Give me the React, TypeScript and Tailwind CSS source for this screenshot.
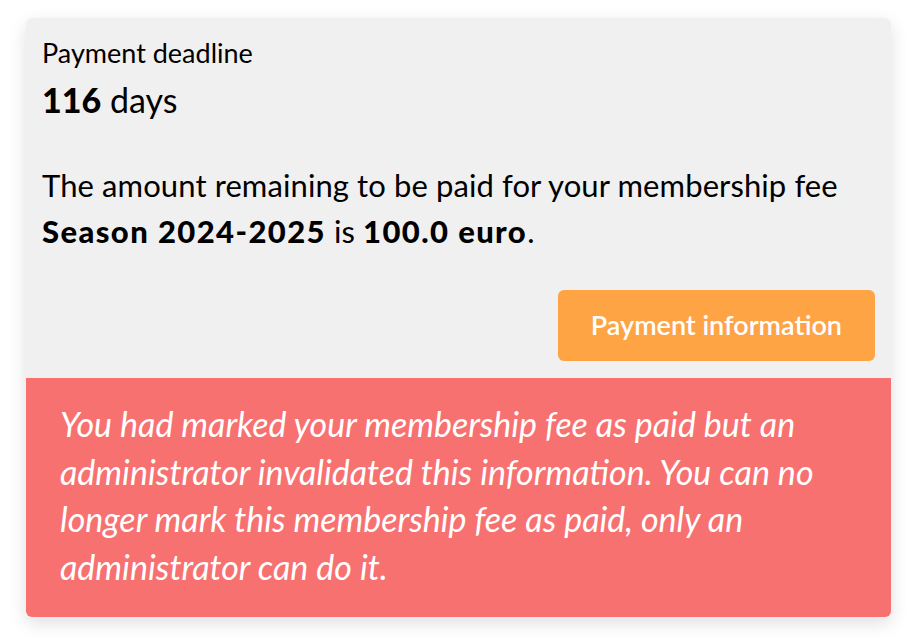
export default function App() {
	return (
		<div className="min-h-screen bg-white pt-[18px] pl-[26px] pr-[29px] font-['Lato',sans-serif] text-black">
			<div className="overflow-hidden rounded-[6px] bg-[#f0f0f0] shadow-[0_6px_18px_rgba(0,0,0,0.13)]">
				<div className="px-4 pt-[17px] pb-[17px]">
					<p className="text-[27px] leading-[36px]">Payment deadline</p>
					<p className="mt-[6px] text-[34px] leading-[46px]">
						<span className="font-black">116</span> days
					</p>
					<p className="mt-[39px] text-[31px] leading-[46px] tracking-[0.1px]">
						The amount remaining to be paid for your membership fee
						<br />
						<span className="font-black tracking-[1.4px]">Season 2024-2025</span> is{' '}
						<span className="font-black tracking-[1.4px]">100.0 euro</span>.
					</p>
					<div className="mt-[36px] flex justify-end">
						<button className="h-[71px] rounded-[6px] bg-[#ffa445] px-[33px] text-[27px] font-semibold text-white">
							Payment information
						</button>
					</div>
				</div>
				<div className="bg-[#f87171] px-[34px] pt-[22px] pb-[27px]">
					<p className="text-[34px] italic leading-[47.5px] text-white">
						You had marked your membership fee as paid but an
						<br />
						administrator invalidated this information. You can no
						<br />
						longer mark this membership fee as paid, only an
						<br />
						administrator can do it.
					</p>
				</div>
			</div>
		</div>
	);
}
